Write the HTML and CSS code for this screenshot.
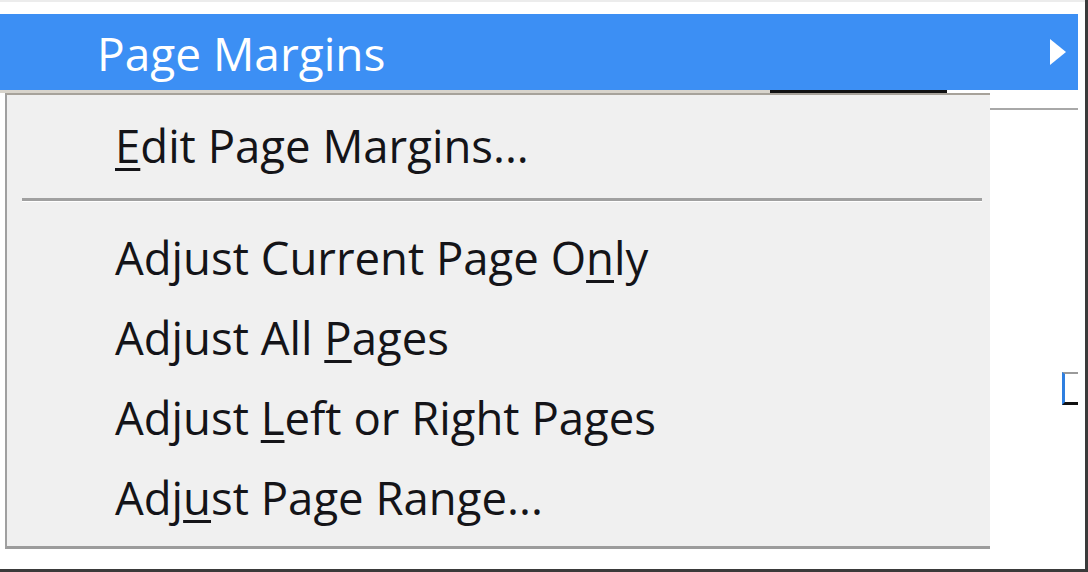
FILE: index.html
```html
<!DOCTYPE html>
<html lang="en">
<head>
<meta charset="utf-8">
<title>Page Margins menu</title>
<link rel="stylesheet" href="styles.css">
</head>
<body>
<div class="screen">
  <div class="top-strip"></div>
  <div class="highlight">
    <span class="highlight-label">Page Margins</span>
    <svg class="submenu-arrow" width="16" height="26" viewBox="0 0 16 26"><polygon points="0,0 16,13 0,26" fill="#ffffff"/></svg>
  </div>
  <div class="seam">
    <div class="seam-left"></div>
    <div class="seam-dark"></div>
  </div>
  <div class="lower">
    <div class="menu">
      <div class="menu-item"><span class="key">E</span>dit Page Margins...</div>
      <div class="separator"></div>
      <div class="menu-item">Adjust Current Page O<span class="key">n</span>ly</div>
      <div class="menu-item">Adjust All <span class="key">P</span>ages</div>
      <div class="menu-item">Adjust <span class="key">L</span>eft or Right Pages</div>
      <div class="menu-item">Adj<span class="key">u</span>st Page Range...</div>
    </div>
    <div class="side">
      <div class="side-rule"></div>
      <div class="side-bracket"></div>
    </div>
  </div>
</div>
</body>
</html>
```

FILE: styles.css
```css
html, body {
  margin: 0;
  padding: 0;
  background: #ffffff;
}

.screen {
  width: 1088px;
  height: 572px;
  box-sizing: border-box;
  border-right: 3px solid #3a3a3a;
  border-bottom: 3px solid #3a3a3a;
  background: #ffffff;
  overflow: hidden;
  font-family: "Open Sans", "Noto Sans", "DejaVu Sans", sans-serif;
}

.top-strip {
  height: 14px;
  border-top: 2px solid #ececec;
  box-sizing: border-box;
}

.highlight {
  height: 76px;
  width: 1078px;
  background: #3c8ff4;
  display: flex;
  align-items: center;
  justify-content: space-between;
  box-sizing: border-box;
  padding: 2px 12px 0 97px;
}

.highlight-label {
  color: #ffffff;
  font-size: 46px;
  line-height: 74px;
}

.submenu-arrow {
  display: block;
  margin-bottom: 2px;
}

.seam {
  height: 3px;
  display: flex;
}

.seam-left {
  width: 770px;
  background: #d8d4cc;
}

.seam-dark {
  width: 177px;
  background: #111111;
}

.lower {
  display: flex;
  height: 476px;
}

.menu {
  margin-left: 5px;
  width: 985px;
  height: 456px;
  box-sizing: border-box;
  background: #f0f0f0;
  border-top: 2px solid #a7a29a;
  border-left: 2px solid #a0a0a0;
  border-bottom: 3px solid #9c9c9c;
  padding-top: 10px;
}

.menu-item {
  height: 80px;
  line-height: 80px;
  padding-left: 108px;
  font-size: 45.5px;
  font-weight: 500;
  color: #141418;
  white-space: nowrap;
}

.key {
  text-decoration: underline;
  text-decoration-thickness: 3px;
  text-underline-offset: 5px;
}

.separator {
  margin: 13px 8px 15px 15px;
  height: 3px;
  background: #a0a0a0;
  border-bottom: 1px solid #ffffff;
}

.side {
  flex: 1;
  display: flex;
  flex-direction: column;
  align-items: flex-end;
}

.side-rule {
  margin-top: 15px;
  margin-right: 7px;
  align-self: stretch;
  height: 2px;
  background: #a8a8a8;
}

.side-bracket {
  margin-top: 262px;
  margin-right: 7px;
  width: 13px;
  height: 28px;
  border-left: 3px solid #2f7fe0;
  border-top: 2px solid #9a9a9a;
  border-bottom: 3px solid #111111;
}
```
